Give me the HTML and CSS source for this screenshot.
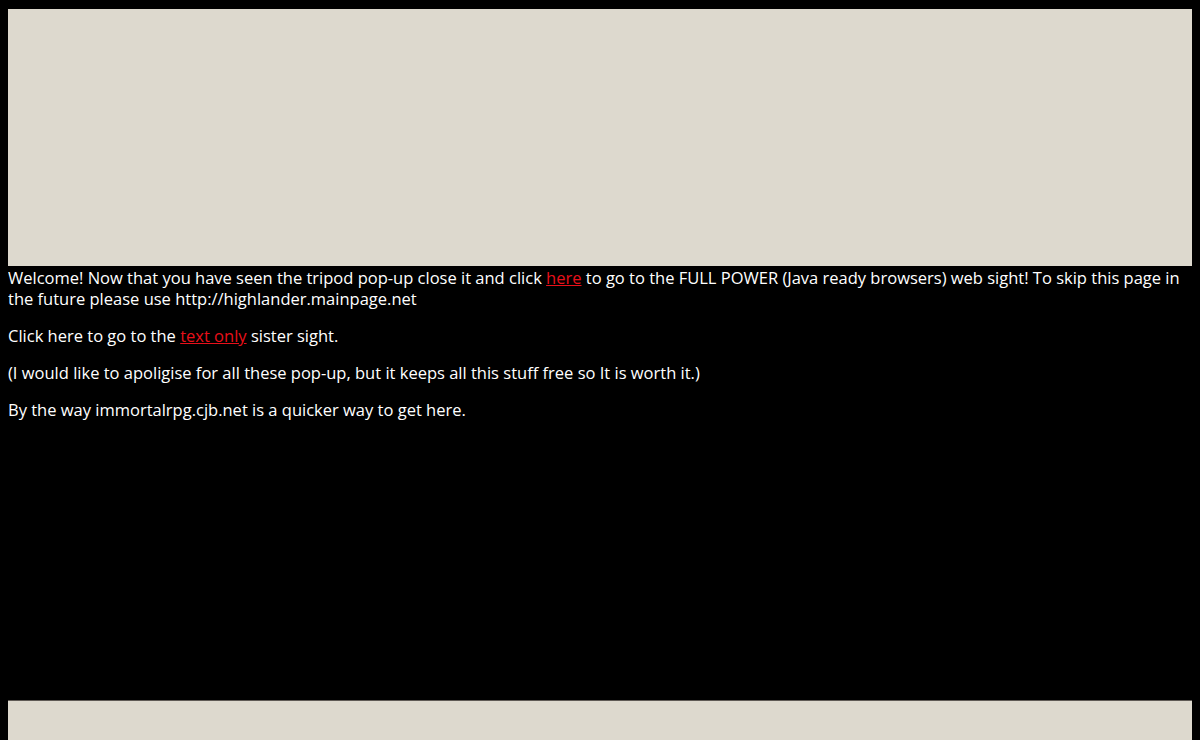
FILE: index.html
```html
<!DOCTYPE html>
<html lang="en">
<head>
    <meta charset="UTF-8">
    <title>Immortal RPG</title>
    <link rel="stylesheet" href="styles.css">
</head>
<body>
    <!-- tripod banner -->
    <div class="banner top-banner"></div>

    <div class="intro">
        Welcome! Now that you have seen the tripod pop-up close it and click <a href="#">here</a> to go to the FULL POWER (Java ready browsers) web sight! To skip this page in the future please use http://highlander.mainpage.net
    </div>

    <p>Click here to go to the <a href="#">text only</a> sister sight.</p>

    <p>(I would like to apoligise for all these pop-up, but it keeps all this stuff free so It is worth it.)</p>

    <p>By the way immortalrpg.cjb.net is a quicker way to get here.</p>

    <div class="banner bottom-banner"></div>
</body>
</html>
```

FILE: styles.css
```css
html, body {
    background-color: black;
}

body {
    margin: 8px;
    color: white;
    font-family: 'Open Sans', sans-serif;
    font-size: 16.5px;
    line-height: 21px;
}

.banner {
    background-color: #ddd9ce;
}

.top-banner {
    margin-top: 1px;
    height: 257px;
}

.bottom-banner {
    margin-top: 280px;
    height: 60px;
    border-top: 1px solid #5f5a55;
}

.intro {
    margin-top: 1px;
}

p {
    margin: 16px 0;
}

a {
    color: #e8101a;
}
```
